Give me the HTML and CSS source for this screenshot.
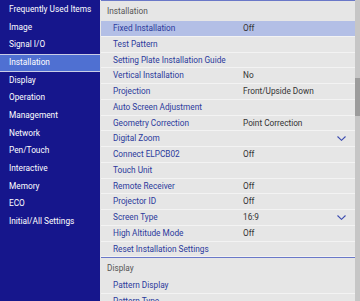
FILE: index.html
```html
<!DOCTYPE html>
<html>
<head>
<meta charset="utf-8">
<link rel="stylesheet" href="styles.css">
</head>
<body>
<div class="screen">
  <nav class="sidebar">
    <div class="nav-item">Frequently Used Items</div>
    <div class="nav-item">Image</div>
    <div class="nav-item">Signal I/O</div>
    <div class="nav-item selected">Installation</div>
    <div class="nav-item">Display</div>
    <div class="nav-item">Operation</div>
    <div class="nav-item">Management</div>
    <div class="nav-item">Network</div>
    <div class="nav-item">Pen/Touch</div>
    <div class="nav-item">Interactive</div>
    <div class="nav-item">Memory</div>
    <div class="nav-item">ECO</div>
    <div class="nav-item">Initial/All Settings</div>
  </nav>
  <div class="panel">
    <div class="list">
      <div class="section">Installation</div>
      <div class="row active"><span class="label">Fixed Installation</span><span class="value">Off</span><span class="icon"></span></div>
      <div class="row"><span class="label">Test Pattern</span><span class="value"></span><span class="icon"></span></div>
      <div class="row"><span class="label">Setting Plate Installation Guide</span><span class="value"></span><span class="icon"></span></div>
      <div class="row"><span class="label">Vertical Installation</span><span class="value">No</span><span class="icon"></span></div>
      <div class="row"><span class="label">Projection</span><span class="value">Front/Upside Down</span><span class="icon"></span></div>
      <div class="row"><span class="label">Auto Screen Adjustment</span><span class="value"></span><span class="icon"></span></div>
      <div class="row"><span class="label">Geometry Correction</span><span class="value">Point Correction</span><span class="icon"></span></div>
      <div class="row"><span class="label">Digital Zoom</span><span class="value"></span><span class="icon"><svg width="9" height="5" viewBox="0 0 9 5"><path d="M0.5 0.5 L4.5 4.3 L8.5 0.5" fill="none" stroke="#3b4bb0" stroke-width="1.1"/></svg></span></div>
      <div class="row"><span class="label">Connect ELPCB02</span><span class="value">Off</span><span class="icon"></span></div>
      <div class="row"><span class="label">Touch Unit</span><span class="value"></span><span class="icon"></span></div>
      <div class="row"><span class="label">Remote Receiver</span><span class="value">Off</span><span class="icon"></span></div>
      <div class="row"><span class="label">Projector ID</span><span class="value">Off</span><span class="icon"></span></div>
      <div class="row"><span class="label">Screen Type</span><span class="value">16:9</span><span class="icon"><svg width="9" height="5" viewBox="0 0 9 5"><path d="M0.5 0.5 L4.5 4.3 L8.5 0.5" fill="none" stroke="#3b4bb0" stroke-width="1.1"/></svg></span></div>
      <div class="row"><span class="label">High Altitude Mode</span><span class="value">Off</span><span class="icon"></span></div>
      <div class="row"><span class="label">Reset Installation Settings</span><span class="value"></span><span class="icon"></span></div>
      <div class="section">Display</div>
      <div class="row"><span class="label">Pattern Display</span><span class="value"></span><span class="icon"></span></div>
      <div class="row"><span class="label">Pattern Type</span><span class="value"></span><span class="icon"></span></div>
    </div>
    <div class="scrollbar"><div class="thumb"></div></div>
  </div>
</div>
</body>
</html>
```

FILE: styles.css
```css
html, body {
  margin: 0;
  padding: 0;
  width: 360px;
  height: 301px;
  overflow: hidden;
  background: #e6e6e6;
  font-family: Roboto, "Open Sans", sans-serif;
  font-size: 8.25px;
}

.screen {
  display: flex;
  width: 360px;
  height: 301px;
  gap: 1px;
}

.sidebar {
  width: 100px;
  flex: none;
  background: #16168c;
  padding-top: 1px;
  display: flex;
  flex-direction: column;
}

.nav-item {
  height: 17.67px;
  line-height: 17.67px;
  padding-left: 9px;
  color: #ffffff;
  white-space: nowrap;
  box-sizing: border-box;
  font-size: 8.3px;
}

.nav-item.selected {
  background: #4f70d2;
  border-top: 1px solid #c9cde6;
  border-bottom: 1px solid #c9cde6;
  line-height: 15.67px;
}

.panel {
  flex: 1;
  display: flex;
  min-width: 0;
}

.list {
  width: 254px;
  flex: none;
  display: flex;
  flex-direction: column;
  overflow: hidden;
}

.section {
  flex: none;
  height: 20px;
  line-height: 20px;
  border-top: 1px solid #6a78c8;
  padding-left: 6px;
  color: #555555;
}

.row {
  flex: none;
  height: 15.75px;
  box-sizing: border-box;
  border-bottom: 1px solid #f3f3f3;
  display: grid;
  grid-template-columns: 130px 1fr 18px;
  align-items: center;
  padding-left: 12px;
  line-height: 14.75px;
}

.row.active {
  background: #b3bfe6;
}

.label {
  color: #2b3a9c;
  white-space: nowrap;
}

.value {
  color: #333333;
  white-space: nowrap;
}

.icon {
  display: flex;
  align-items: center;
  justify-content: flex-start;
}

.icon svg {
  display: block;
}

.scrollbar {
  flex: 1;
  background: #c6c6c6;
  padding-top: 78px;
}

.thumb {
  height: 38px;
  background: #9c9c9c;
}
```
